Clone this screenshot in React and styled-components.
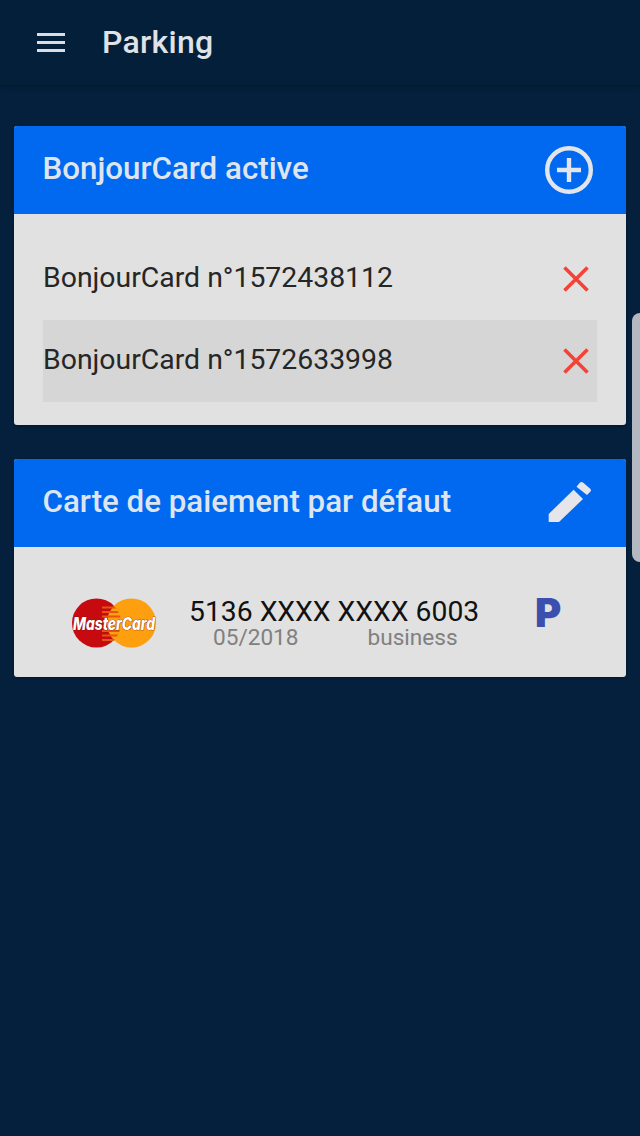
import React from "react";
import styled, { createGlobalStyle } from "styled-components";

const Global = createGlobalStyle`
  html, body { margin: 0; padding: 0; background: #04203c; }
  body { font-family: Roboto, "Liberation Sans", sans-serif; }
  * { box-sizing: border-box; }
`;

const Page = styled.div`
  position: relative;
  width: 640px;
  height: 1136px;
  overflow: hidden;
  background: #04203c;
`;

const TopBar = styled.header`
  height: 85px;
  display: flex;
  align-items: center;
  background: #041f39;
  box-shadow: 0 2px 5px rgba(0, 0, 0, 0.22);
`;

const MenuButton = styled.div`
  width: 102px;
  padding-left: 37px;
  display: flex;
  flex-direction: column;
  gap: 5px;
`;

const MenuLine = styled.span`
  display: block;
  width: 28px;
  height: 3px;
  background: #dadee4;
`;

const Title = styled.h1`
  margin: 0 0 2px;
  font-size: 32px;
  font-weight: 500;
  color: #dfe2e7;
  letter-spacing: 0.25px;
`;

const Content = styled.main`
  padding: 41px 14px 0;
  display: flex;
  flex-direction: column;
  gap: 34px;
`;

const Card = styled.section`
  background: #e1e1e1;
  border-radius: 3px;
  overflow: hidden;
  box-shadow: 0 1px 3px rgba(0, 0, 0, 0.3);
`;

const CardHeader = styled.div`
  height: 88px;
  display: flex;
  align-items: center;
  justify-content: space-between;
  padding: 0 33px 0 29px;
  background: #0069f0;
`;

const CardTitle = styled.h2`
  margin: 0 0 4px -0.5px;
  font-size: 31.3px;
  font-weight: 500;
  color: #dfe5ee;
`;

const Rows = styled.div`
  padding: 24px 29px 23px;
`;

const Row = styled.div`
  height: 82px;
  display: flex;
  align-items: center;
  justify-content: space-between;
  padding-right: 7px;
  background: ${(p) => (p.$selected ? "#d6d6d6" : "transparent")};
`;

const RowLabel = styled.span`
  margin-bottom: 4px;
  font-size: 28.4px;
  color: #262626;
`;

const Payment = styled.div`
  height: 130px;
  display: flex;
  align-items: center;
  padding: 22px 0 0 58px;
`;

const Details = styled.div`
  width: 289px;
  margin: 2px 57px 0 33px;
`;

const CardNumber = styled.div`
  font-size: 28.3px;
  line-height: 28px;
  color: #111;
  text-align: center;
  white-space: nowrap;
`;

const Meta = styled.div`
  display: flex;
  font-size: 22.6px;
  line-height: 24px;
  color: #808080;
  padding-left: 24px;
  gap: 69px;
`;

const ParkingMark = styled.span`
  margin-bottom: 20px;
  font-family: Inter, Roboto, sans-serif;
  font-size: 40px;
  font-weight: 900;
  line-height: 1;
  color: #3c4fae;
`;

const SideHandle = styled.div`
  position: absolute;
  left: 632px;
  top: 313px;
  width: 20px;
  height: 249px;
  border-radius: 8px;
  background: #b4b9c1;
`;

const PlusIcon = () => (
  <svg width="48" height="48" viewBox="0 0 48 48" fill="none" stroke="#e2e6ec">
    <circle cx="24" cy="24" r="21.8" strokeWidth="4.4" />
    <path d="M12 24H36M24 12V36" strokeWidth="4.4" />
  </svg>
);

const CloseIcon = () => (
  <svg width="28" height="28" viewBox="0 0 28 28" fill="none" stroke="#f44336" strokeWidth="3.6">
    <path d="M2.5 2.5L25.5 25.5M25.5 2.5L2.5 25.5" />
  </svg>
);

const PencilIcon = () => (
  <svg width="46" height="44" viewBox="0 0 46 44" fill="#e6e6ea">
    <path d="M1.7 41V33L26.6 8.7L36 18L12 41Z" />
    <path d="M29.5 5.7L33 1.5Q34.5 0.5 36 1.5L43.5 8Q44.5 9.5 43.5 10.5L40 14Z" />
  </svg>
);

const MasterCardLogo = () => (
  <svg width="84" height="50" viewBox="0 0 84 50" style={{ overflow: "visible" }}>
    <defs>
      <clipPath id="mc-overlap">
        <circle cx="24.5" cy="25" r="24.5" />
      </clipPath>
    </defs>
    <circle cx="24.5" cy="25" r="24.5" fill="#c70a0f" />
    <circle cx="59.5" cy="25" r="24.5" fill="#fd9f0f" />
    <g clipPath="url(#mc-overlap)">
      <path
        d="M30 9.5h30M30 14h30M30 18.5h30M30 33h30M30 37.5h30M30 42h30"
        stroke="#e4570c"
        strokeWidth="2.2"
      />
    </g>
    <text
      x="42"
      y="31.5"
      textAnchor="middle"
      fontFamily="Inter, 'Liberation Sans', sans-serif"
      fontSize="17"
      fontWeight="800"
      fontStyle="italic"
      fill="#ffffff"
      stroke="#6d1020"
      strokeWidth="0.7"
      paintOrder="stroke"
      textLength="82"
      lengthAdjust="spacingAndGlyphs"
    >
      MasterCard
    </text>
  </svg>
);

export default function App() {
  return (
    <Page>
      <Global />
      <TopBar>
        <MenuButton>
          <MenuLine />
          <MenuLine />
          <MenuLine />
        </MenuButton>
        <Title>Parking</Title>
      </TopBar>
      <Content>
        <Card>
          <CardHeader>
            <CardTitle>BonjourCard active</CardTitle>
            <PlusIcon />
          </CardHeader>
          <Rows>
            <Row>
              <RowLabel>BonjourCard n°1572438112</RowLabel>
              <CloseIcon />
            </Row>
            <Row $selected>
              <RowLabel>BonjourCard n°1572633998</RowLabel>
              <CloseIcon />
            </Row>
          </Rows>
        </Card>
        <Card>
          <CardHeader>
            <CardTitle>Carte de paiement par défaut</CardTitle>
            <PencilIcon />
          </CardHeader>
          <Payment>
            <MasterCardLogo />
            <Details>
              <CardNumber>5136 XXXX XXXX 6003</CardNumber>
              <Meta>
                <span>05/2018</span>
                <span>business</span>
              </Meta>
            </Details>
            <ParkingMark>P</ParkingMark>
          </Payment>
        </Card>
      </Content>
      <SideHandle />
    </Page>
  );
}
